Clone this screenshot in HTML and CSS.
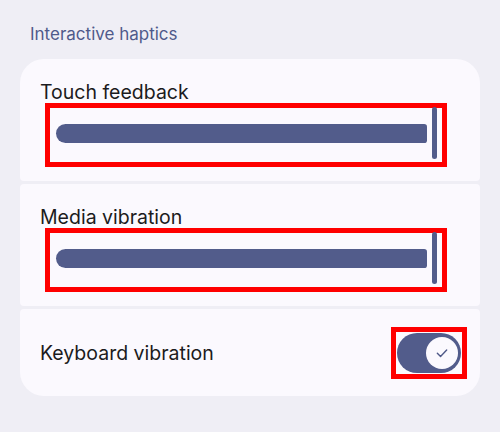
FILE: index.html
```html
<!DOCTYPE html>
<html lang="en">
<head>
    <meta charset="UTF-8">
    <meta name="viewport" content="width=device-width, initial-scale=1.0">
    <title>Interactive haptics</title>
    <link rel="stylesheet" href="styles.css">
</head>
<body>
    <div class="page">
        <h2 class="section-title">Interactive haptics</h2>

        <div class="group">
            <div class="card slider-card">
                <div class="card-label">Touch feedback</div>
                <div class="mark slider">
                    <div class="track"></div>
                    <div class="thumb"></div>
                </div>
            </div>

            <div class="card slider-card">
                <div class="card-label">Media vibration</div>
                <div class="mark slider">
                    <div class="track"></div>
                    <div class="thumb"></div>
                </div>
            </div>

            <div class="card switch-card">
                <div class="card-label">Keyboard vibration</div>
                <div class="mark switch-wrap">
                    <div class="switch">
                        <div class="knob">
                            <svg width="14" height="14" viewBox="0 0 24 24" fill="none" stroke="#4f5988" stroke-width="2.4" stroke-linecap="round" stroke-linejoin="round">
                                <polyline points="4 12.5 9.5 18 20 7"></polyline>
                            </svg>
                        </div>
                    </div>
                </div>
            </div>
        </div>
    </div>
</body>
</html>
```

FILE: styles.css
```css
* {
    margin: 0;
    padding: 0;
    box-sizing: border-box;
    font-family: Inter, Roboto, sans-serif;
}

body {
    background: #efeef5;
    min-height: 100vh;
}

.page {
    padding: 24px 20px 0;
}

.section-title {
    font-size: 17px;
    line-height: 20px;
    font-weight: 400;
    color: #4f5a8b;
    padding-left: 10px;
    margin-bottom: 15px;
}

.group {
    display: flex;
    flex-direction: column;
    gap: 3px;
}

.card {
    background: #fbf9fe;
    border-radius: 4px;
    padding: 0 13px 0 20px;
}

.card:first-child {
    border-radius: 24px 24px 4px 4px;
}

.card:last-child {
    border-radius: 4px 4px 24px 24px;
}

.card-label {
    font-size: 19.5px;
    line-height: 22px;
    color: #1b1b20;
}

.slider-card {
    height: 122px;
    padding-top: 22px;
}

.mark {
    border: 5px solid #ff0000;
}

.slider {
    display: flex;
    align-items: center;
    height: 64px;
    margin: 0 20px 0 5px;
    padding: 0 5px 4px 6px;
}

.track {
    flex: 1;
    height: 19px;
    background: #525c8b;
    border-radius: 10px 3px 3px 10px;
}

.thumb {
    width: 5px;
    height: 52px;
    margin-left: 5px;
    background: #525c8b;
    border-radius: 3px;
}

.switch-card {
    height: 87px;
    display: flex;
    align-items: center;
    justify-content: space-between;
}

.switch-wrap {
    padding: 1px;
}

.switch {
    width: 64px;
    height: 40px;
    border-radius: 20px;
    background: #525c8b;
    display: flex;
    align-items: center;
    justify-content: flex-end;
    padding-right: 3px;
}

.knob {
    width: 32px;
    height: 32px;
    border-radius: 50%;
    background: #fbf9fe;
    display: flex;
    align-items: center;
    justify-content: center;
}
```
